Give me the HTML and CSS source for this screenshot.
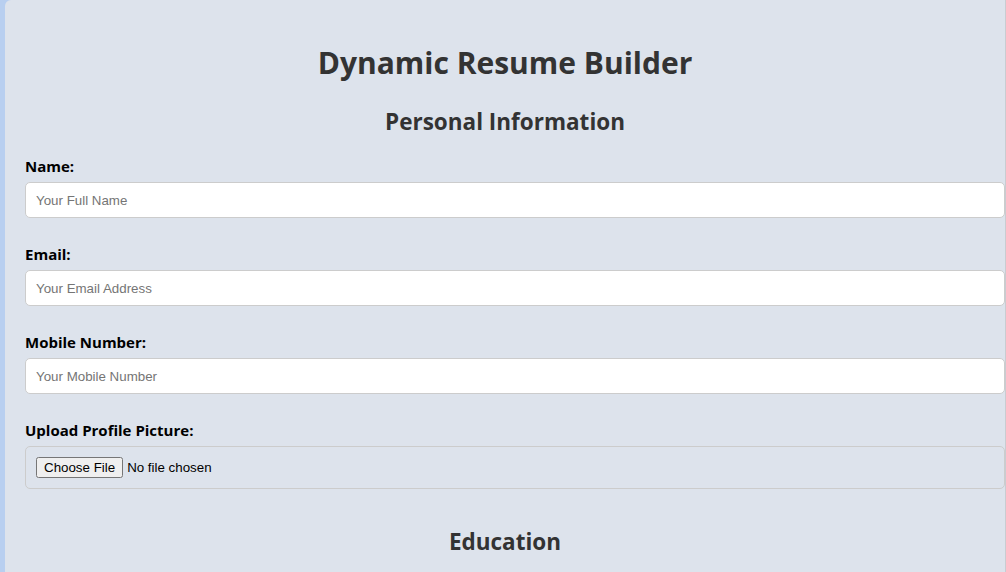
FILE: index.html
```html
<!DOCTYPE html>
<html lang="en">
<head>
<meta charset="utf-8">
<title>Dynamic Resume Builder</title>
<link rel="stylesheet" href="styles.css">
</head>
<body>
<div class="page">
  <main class="container">
    <h1 class="title">Dynamic Resume Builder</h1>
    <h2 class="section-title">Personal Information</h2>
    <div class="form-group">
      <label class="label" for="name">Name:</label>
      <input class="input" id="name" type="text" placeholder="Your Full Name">
    </div>
    <div class="form-group">
      <label class="label" for="email">Email:</label>
      <input class="input" id="email" type="email" placeholder="Your Email Address">
    </div>
    <div class="form-group">
      <label class="label" for="mobile">Mobile Number:</label>
      <input class="input" id="mobile" type="tel" placeholder="Your Mobile Number">
    </div>
    <div class="form-group">
      <label class="label" for="pic">Upload Profile Picture:</label>
      <input class="file-input" id="pic" type="file">
    </div>
    <h2 class="section-title section-title--spaced">Education</h2>
  </main>
</div>
</body>
</html>
```

FILE: styles.css
```css
html, body {
  margin: 0;
  padding: 0;
}

body {
  background: #b8cff0;
  overflow: hidden;
  height: 572px;
}

.page {
  padding-left: 5px;
}

.container {
  width: 960px;
  padding: 0 20px 40px 20px;
  background: #dde3ec;
  border-top-left-radius: 6px;
  border-right: 1px solid #c9ccd1;
  font-family: "Open Sans", "Noto Sans", sans-serif;
  min-height: 572px;
  box-sizing: content-box;
}

.title {
  margin: 0;
  padding-top: 44px;
  font-size: 30px;
  line-height: 38px;
  font-weight: 700;
  color: #333;
  text-align: center;
}

.section-title {
  margin: 25px 0 0;
  font-size: 22.5px;
  line-height: 29px;
  font-weight: 700;
  color: #333;
  text-align: center;
}

.section-title--spaced {
  margin-top: 38px;
}

.form-group {
  margin-top: 20px;
}

.form-group + .form-group {
  margin-top: 26px;
}

.label {
  display: block;
  font-size: 15px;
  line-height: 21px;
  font-weight: 700;
  color: #000;
  margin-bottom: 5px;
}

.input,
.file-input {
  display: block;
  width: calc(100% + 20px);
  box-sizing: border-box;
  border: 1px solid #ccc;
  border-radius: 5px;
  font-family: "Liberation Sans", Arial, sans-serif;
  font-size: 13.33px;
  color: #000;
}

.input {
  height: 36px;
  padding: 0 10px;
  background: #fff;
}

.input::placeholder {
  color: #757575;
}

.file-input {
  height: 43px;
  padding: 10px;
  background: transparent;
}
```
